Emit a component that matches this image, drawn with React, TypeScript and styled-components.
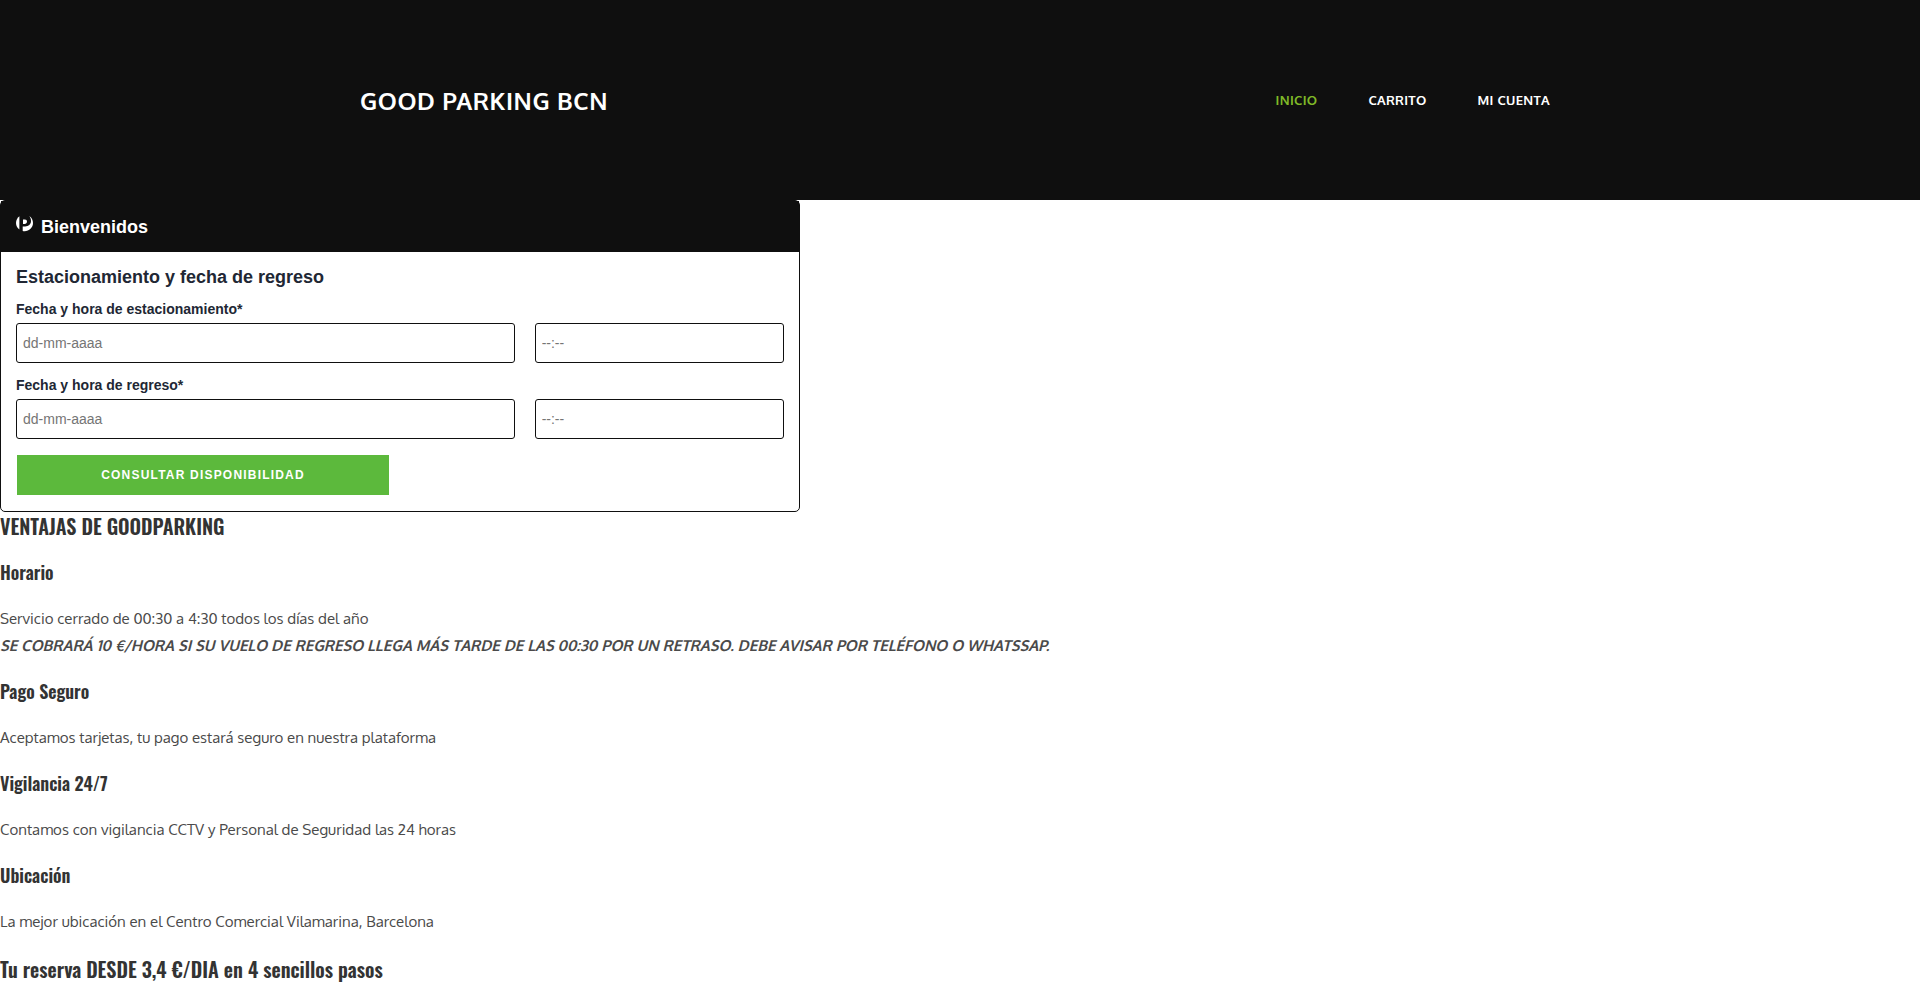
import React from "react";
import styled, { createGlobalStyle } from "styled-components";

const sans = '"Oxygen", "Noto Sans", sans-serif';
const condensed = '"Oswald", "Liberation Sans Narrow", sans-serif';
const form = '"Liberation Sans", Arial, sans-serif';

const GlobalStyle = createGlobalStyle`
  *, *::before, *::after { box-sizing: border-box; }
  body { margin: 0; background: #fff; color: #4a4a4a; font: 15px/27px ${sans}; }
  h1, h2, h3, p { margin: 0; }
`;

const Header = styled.header`
  background: #0f0f0f;
`;

const HeaderInner = styled.div`
  display: flex;
  align-items: center;
  justify-content: space-between;
  max-width: 1200px;
  min-height: 200px;
  margin: 0 auto;
`;

const SiteName = styled.a`
  color: #fff;
  font-size: 24px;
  font-weight: 600;
  letter-spacing: 0.025em;
  text-decoration: none;
`;

const Nav = styled.nav`
  display: flex;
  gap: 51px;
  padding-right: 10px;
`;

const NavLink = styled.a<{ $active?: boolean }>`
  color: ${(p) => (p.$active ? "#7fb927" : "#fff")};
  font-size: 13px;
  font-weight: 700;
  letter-spacing: 0.025em;
  text-decoration: none;
`;

const Card = styled.section`
  max-width: 800px;
  border: 1px solid #0f0f0f;
  border-radius: 5px;
  font-family: ${form};
  color: #212734;
`;

const CardHeader = styled.div`
  display: flex;
  align-items: center;
  gap: 8px;
  height: 51px;
  padding: 0 15px;
  background: #0f0f0f;
  color: #fff;
`;

const Badge = styled.svg`
  display: block;
  align-self: flex-start;
  margin-top: 14px;
`;

const CardTitle = styled.h2`
  font-size: 18px;
  font-weight: 700;
  line-height: 24px;
`;

const Form = styled.form`
  padding: 12px 15px 16px;
`;

const FormTitle = styled.h3`
  margin-bottom: 9px;
  font-size: 18px;
  font-weight: 700;
  line-height: 26px;
`;

const Label = styled.label`
  display: block;
  font-size: 14px;
  font-weight: 700;
  line-height: 20px;
`;

const Row = styled.div`
  display: grid;
  grid-template-columns: 2fr 1fr;
  gap: 20px;
  margin: 4px 0 12px;
`;

const Input = styled.input`
  width: 100%;
  min-width: 0;
  height: 40px;
  padding: 0 6px;
  border: 1px solid #0f0f0f;
  border-radius: 3px;
  background: #fff;
  color: #212734;
  font: 14px ${form};

  &::placeholder {
    color: #757575;
  }
`;

const Submit = styled.button`
  display: block;
  width: 372px;
  max-width: 100%;
  height: 40px;
  margin: 16px 0 0 1px;
  border: 0;
  background: #5cb93c;
  color: #fff;
  font: 700 12px ${form};
  letter-spacing: 0.1em;
  text-transform: uppercase;
  cursor: pointer;
`;

const SectionTitle = styled.h2`
  color: #333;
  font: 600 20px/28px ${condensed};
`;

const ItemTitle = styled.h3`
  color: #333;
  font: 600 18px/25px ${condensed};
`;

const Article = styled.article`
  display: flex;
  flex-direction: column;
  gap: 20px;
`;

const Notice = styled.em`
  display: block;
  font-weight: 600;
`;

const items = [
  {
    title: "Horario",
    text: "Servicio cerrado de 00:30 a 4:30 todos los días del año",
    notice:
      "SE COBRARÁ 10 €/HORA SI SU VUELO DE REGRESO LLEGA MÁS TARDE DE LAS 00:30 POR UN RETRASO. DEBE AVISAR POR TELÉFONO O WHATSSAP.",
  },
  { title: "Pago Seguro", text: "Aceptamos tarjetas, tu pago estará seguro en nuestra plataforma" },
  { title: "Vigilancia 24/7", text: "Contamos con vigilancia CCTV y Personal de Seguridad las 24 horas" },
  { title: "Ubicación", text: "La mejor ubicación en el Centro Comercial Vilamarina, Barcelona" },
];

const fields = [
  { id: "entrada", label: "Fecha y hora de estacionamiento*" },
  { id: "regreso", label: "Fecha y hora de regreso*" },
];

export default function App() {
  return (
    <>
      <GlobalStyle />
      <Header>
        <HeaderInner>
          <SiteName href="#">GOOD PARKING BCN</SiteName>
          <Nav>
            <NavLink href="#" $active>INICIO</NavLink>
            <NavLink href="#carrito">CARRITO</NavLink>
            <NavLink href="#cuenta">MI CUENTA</NavLink>
          </Nav>
        </HeaderInner>
      </Header>
      <main>
        <Card>
          <CardHeader>
            <Badge width="17" height="18" viewBox="0 0 17 18" fill="#fff" aria-hidden="true">
              <path d="M3.400 1.200C1.300 2.800 0 5.200 0 8c0 2.900 1.300 5.100 3.400 6.500z" />
              <path d="M7 4.400h1.600a2.200 2.200 0 0 1 2.400 2.200c0 1.500-1 2.400-2.400 2.400H7z" />
              <path d="M13.200 1C15.700 2.600 17 5.200 17 8c0 4.600-3.800 8.200-8.400 8.200-.8 0-1.300-.1-1.900-.3v-4.500h2.400c3.500 0 5.900-2.200 5.900-5.400 0-2-.7-3.800-1.800-5z" />
            </Badge>
            <CardTitle>Bienvenidos</CardTitle>
          </CardHeader>
          <Form onSubmit={(e) => e.preventDefault()}>
            <FormTitle>Estacionamiento y fecha de regreso</FormTitle>
            {fields.map((f) => (
              <React.Fragment key={f.id}>
                <Label htmlFor={f.id}>{f.label}</Label>
                <Row>
                  <Input id={f.id} type="text" placeholder="dd-mm-aaaa" />
                  <Input type="text" placeholder="--:--" aria-label={f.label} />
                </Row>
              </React.Fragment>
            ))}
            <Submit type="submit">Consultar disponibilidad</Submit>
          </Form>
        </Card>
        <Article>
          <SectionTitle>VENTAJAS DE GOODPARKING</SectionTitle>
          {items.map((item) => (
            <React.Fragment key={item.title}>
              <ItemTitle>{item.title}</ItemTitle>
              <p>
                {item.text}
                {item.notice && <Notice>{item.notice}</Notice>}
              </p>
            </React.Fragment>
          ))}
          <SectionTitle>Tu reserva DESDE 3,4 €/DIA en 4 sencillos pasos</SectionTitle>
        </Article>
      </main>
    </>
  );
}
